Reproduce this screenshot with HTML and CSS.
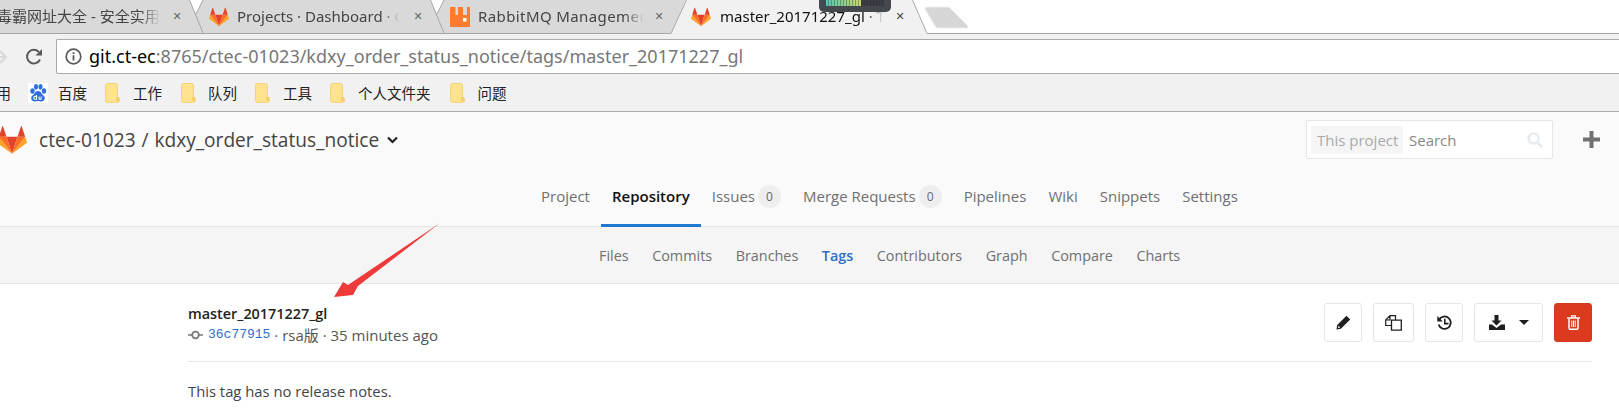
FILE: index.html
```html
<!DOCTYPE html>
<html lang="en">
<head>
<meta charset="utf-8">
<title>master_20171227_gl</title>
<link rel="stylesheet" href="styles.css">
</head>
<body>
<svg class="defs" width="0" height="0">
  <symbol id="tanuki" viewBox="0 0 36 36">
    <path fill="#e24329" d="M18 34.6 24.6 14.1H11.4z"/>
    <path fill="#fc6d26" d="M18 34.6 11.4 14.1H2.2z"/>
    <path fill="#fca326" d="M2.2 14.1.2 20.3c-.2.6 0 1.2.5 1.5L18 34.6z"/>
    <path fill="#e24329" d="M2.2 14.1h9.2L7.4 2c-.2-.6-1-.6-1.2 0z"/>
    <path fill="#fc6d26" d="M18 34.6 24.6 14.1h9.2z"/>
    <path fill="#fca326" d="M33.8 14.1l2 6.2c.2.6 0 1.2-.5 1.5L18 34.6z"/>
    <path fill="#e24329" d="M33.8 14.1h-9.2L28.6 2c.2-.6 1-.6 1.2 0z"/>
  </symbol>
  <symbol id="folder" viewBox="0 0 15 20">
    <path fill="#ffe38f" stroke="#f3d27a" d="M.5 2.5a2 2 0 0 1 2-2h8a2 2 0 0 1 2 2v14h2v1a2 2 0 0 1-2 2h-10a2 2 0 0 1-2-2z"/>
    <path fill="#f6cf6d" d="M11 14h3.500v4h-3.500z"/>
  </symbol>
</svg>

<div class="tabstrip">
  <svg class="tabshapes" width="1619" height="34" viewBox="0 0 1619 34">
    <path fill="#d9d9d9" d="M0 0H189L203 33H0zM203 33L189 0H430L444 33zM444 33L430 0H686L671 33z"/>
    <path fill="#fff" d="M189 0h14l-7 14zM430 0h14l-7 14zM912 0h707v33H927z"/>
    <path fill="#f1f1f1" d="M671 34L686 0H912L927 34z"/>
    <path fill="none" stroke="#a6a6a6" d="M0 33.500H671L686.500 0M912.500 0L927 33.500H1619M189.500 0L203 33M430.500 0L444 33M196 14L203 0M437 14L444 0"/>
    <path fill="#d6d6d6" stroke="#eee" d="M925 9a2 2 0 0 1 2-2H948a3 3 0 0 1 3 2L967 25a1.500 1.500 0 0 1-1.500 3H938a3 3 0 0 1-3-2z"/>
  </svg>
  <div class="tab tab-first">
    <span class="tab-title tab-title-first">毒霸网址大全 - 安全实用网址</span>
    <span class="tab-x">✕</span>
  </div>
  <div class="tab tab-second">
    <svg class="favicon"><use href="#tanuki"/></svg>
    <span class="tab-title tab-title-second">Projects · Dashboard · GitLab</span>
    <span class="tab-x">✕</span>
  </div>
  <div class="tab tab-third">
    <svg class="favicon" viewBox="0 0 20 20">
      <path fill="#ff7b32" d="M0 0h5.500v8H8V0h5v8h4V0h3v20H0z"/>
      <path fill="#fff" d="M13 11h3.500v3.500H13z"/>
    </svg>
    <span class="tab-title tab-title-third">RabbitMQ Management</span>
    <span class="tab-x">✕</span>
  </div>
  <div class="tab tab-active">
    <svg class="favicon"><use href="#tanuki"/></svg>
    <span class="tab-title tab-title-active">master_20171227_gl · Tags</span>
    <span class="tab-x tab-x-active">✕</span>
  </div>
  <div class="meter"><span class="meter-lit"></span></div>
</div>

<div class="toolbar">
  <svg class="back" width="7" height="16" viewBox="0 0 7 16"><path fill="none" stroke="#d8d8d8" stroke-width="2.200" d="M-3 8h9M0 2l6 6-6 6"/></svg>
  <svg class="reload" width="18" height="18" viewBox="0 0 18 18"><path fill="none" stroke="#5a5a5a" stroke-width="2" d="M15 11.500A6.800 6.800 0 1 1 13.800 4"/><path fill="#5a5a5a" d="M17 1v6.500h-6.500z"/></svg>
  <div class="omnibox">
    <svg class="info" width="17" height="17" viewBox="0 0 17 17"><circle cx="8.500" cy="8.500" r="7.300" fill="none" stroke="#5a5a5a" stroke-width="1.700"/><path fill="#5a5a5a" d="M7.600 7.300h1.800v5.200H7.600zM7.600 4.300h1.800v1.800H7.600z"/></svg>
    <span class="url"><span class="url-host">git.ct-ec</span>:8765/ctec-01023/kdxy_order_status_notice/tags/master_20171227_gl</span>
  </div>
</div>

<div class="bookmarks">
  <span class="bm bm-apps">用</span>
  <svg class="baidu" width="20" height="20" viewBox="0 0 20 20">
    <rect width="20" height="20" fill="#fff"/>
    <g fill="#2f6fe0"><ellipse cx="4.500" cy="8" rx="2.200" ry="2.800"/><ellipse cx="8" cy="3.800" rx="2" ry="2.800"/><ellipse cx="12.500" cy="3.800" rx="2" ry="2.800"/><ellipse cx="16" cy="8" rx="2.200" ry="2.800"/><path d="M10 8c3 0 3.500 3 5.500 4.500 2.500 2 1 6-2 6-1.500 0-2.500-.6-3.500-.6s-2 .6-3.500.6c-3 0-4.500-4-2-6C6.500 11 7 8 10 8z"/></g>
    <path fill="none" stroke="#fff" stroke-width="1.100" d="M8.500 12v4.300H7.200a1.400 1.400 0 0 1 0-2.900h1.300M11 13.500v1.800c0 1.400 2.200 1.400 2.200 0v-1.800"/>
  </svg>
  <span class="bm bm-baidu">百度</span>
  <svg class="bm-folder bm-gap-a"><use href="#folder"/></svg><span class="bm bm-label">工作</span>
  <svg class="bm-folder bm-gap-b"><use href="#folder"/></svg><span class="bm bm-label-b">队列</span>
  <svg class="bm-folder bm-gap-a"><use href="#folder"/></svg><span class="bm bm-label">工具</span>
  <svg class="bm-folder bm-gap-a"><use href="#folder"/></svg><span class="bm bm-label">个人文件夹</span>
  <svg class="bm-folder bm-gap-b"><use href="#folder"/></svg><span class="bm bm-label">问题</span>
</div>

<header class="page-head">
  <div class="head-top">
    <svg class="logo"><use href="#tanuki"/></svg>
    <span class="crumb">ctec-01023 / kdxy_order_status_notice</span>
    <svg class="crumb-caret" width="11" height="8" viewBox="0 0 11 8"><path fill="none" stroke="#222" stroke-width="2.200" d="M1 1.500l4.500 4.500L10 1.500"/></svg>
    <div class="search">
      <span class="search-scope">This project</span>
      <span class="search-text">Search</span>
      <svg class="search-icon" width="16" height="16" viewBox="0 0 16 16"><circle cx="6.500" cy="6.500" r="5" fill="none" stroke="#e8ebef" stroke-width="2.600"/><path stroke="#e8ebef" stroke-width="3" d="M10.500 10.500l4.500 4.500"/></svg>
    </div>
    <svg class="plus" width="17" height="17" viewBox="0 0 17 17"><path fill="#707070" d="M6.500 0h4v6.500H17v4h-6.500V17h-4v-6.500H0v-4h6.500z"/></svg>
  </div>
  <nav class="nav">
    <a class="nav-item">Project</a>
    <a class="nav-item nav-active">Repository</a>
    <a class="nav-item">Issues<span class="badge">0</span></a>
    <a class="nav-item">Merge Requests<span class="badge">0</span></a>
    <a class="nav-item">Pipelines</a>
    <a class="nav-item">Wiki</a>
    <a class="nav-item">Snippets</a>
    <a class="nav-item">Settings</a>
  </nav>
</header>
<nav class="subnav">
  <a class="sub-item">Files</a>
  <a class="sub-item">Commits</a>
  <a class="sub-item">Branches</a>
  <a class="sub-item sub-active">Tags</a>
  <a class="sub-item">Contributors</a>
  <a class="sub-item">Graph</a>
  <a class="sub-item">Compare</a>
  <a class="sub-item">Charts</a>
</nav>

<main class="content">
  <div class="tag-head">
    <div class="tag-info">
      <div class="tag-name">master_20171227_gl</div>
      <div class="tag-meta">
        <svg class="commit-icon" width="15" height="10" viewBox="0 0 15 10"><path fill="none" stroke="#777" stroke-width="1.600" d="M0 5h4M11 5h4"/><circle cx="7.500" cy="5" r="3.300" fill="none" stroke="#777" stroke-width="1.800"/></svg>
        <a class="sha">36c77915</a><span> · rsa版 · 35 minutes ago</span>
      </div>
    </div>
    <div class="actions">
      <button class="btn btn-edit"><svg width="15" height="15" viewBox="0 0 15 15"><path fill="#1f1f1f" d="M10.500.8l3.700 3.700-9.300 9.300L.5 14.500l.7-4.400zM2.500 10.700l-.5 2.300 2.300-.5z"/></svg></button>
      <button class="btn btn-copy"><svg width="17" height="16" viewBox="0 0 17 16"><path fill="#fff" stroke="#1f1f1f" stroke-width="1.200" d="M5 .7h5.500v9.800H.7V5zM5 .7V5H.7"/><path fill="#fff" stroke="#1f1f1f" stroke-width="1.300" d="M6.500 5.200h9.800v10H6.500z"/></svg></button>
      <button class="btn btn-hist"><svg width="15" height="15" viewBox="0 0 15 15"><path fill="none" stroke="#1f1f1f" stroke-width="1.800" d="M2.200 4.500A6.200 6.200 0 1 1 1.600 9.500"/><path fill="#1f1f1f" d="M.3 1v5.500h5.500zM7 3.800h1.600v4H11.500v1.600H7z"/></svg></button>
      <button class="btn btn-dl">
        <svg width="16" height="15" viewBox="0 0 16 15"><path fill="#1f1f1f" d="M5.500 0h4v5.500h3L7.500 10.500 2.500 5.500h3zM0 9.500h3L7.500 13 12 9.500h4V15H0z"/></svg>
        <svg width="10" height="5" viewBox="0 0 10 5"><path fill="#1f1f1f" d="M0 0h10L5 5z"/></svg>
      </button>
      <button class="btn btn-del"><svg width="13" height="15" viewBox="0 0 13 15"><path fill="none" stroke="#fff" stroke-width="1.500" d="M2 4v9a1.300 1.300 0 0 0 1.300 1.300h6.400A1.300 1.300 0 0 0 11 13V4"/><path fill="#fff" d="M0 2.300h13v1.500H0zM4 .2h5v2.500H7.800V1.400H5.200v1.300H4zM4.300 5.500h1v6.500h-1zM6 5.500h1v6.500H6zM7.700 5.500h1v6.500h-1z"/></svg></button>
    </div>
  </div>
  <p class="notes">This tag has no release notes.</p>
</main>

<svg class="arrow" width="120" height="90" viewBox="0 0 120 90"><path fill="#ee3a3a" d="M4 84L13 69 18 72 110 10 28 73 23 82z"/></svg>
</body>
</html>
```

FILE: styles.css
```css
* { box-sizing: border-box; }
html, body { margin: 0; padding: 0; }
body {
  width: 1619px;
  height: 410px;
  overflow: hidden;
  position: relative;
  background: #fff;
  font-family: "Open Sans", "Noto Sans CJK SC", sans-serif;
  color: #555;
}
.defs { position: absolute; }

/* browser chrome */
.tabstrip {
  position: relative;
  display: flex;
  height: 34px;
  font-family: "Noto Sans", "Noto Sans CJK SC", sans-serif;
  font-size: 15px;
  color: #444;
  background: #fff;
}
.tabshapes { position: absolute; left: 0; top: 0; }
.tab { position: relative; display: flex; align-items: center; height: 33px; overflow: hidden; flex: none; }
.tab-first { width: 203px; }
.tab-second { width: 241px; padding-left: 6px; }
.tab-third { width: 242px; padding-left: 6px; }
.tab-active { width: 226px; padding-left: 5px; color: #111; }
.favicon { width: 20px; height: 20px; flex: none; }
.tab-title {
  display: block;
  overflow: hidden;
  white-space: nowrap;
  flex: none;
  margin-bottom: 2px;
  -webkit-mask-image: linear-gradient(to right, #000 88%, transparent);
  mask-image: linear-gradient(to right, #000 88%, transparent);
}
.tab-title-first { width: 163px; margin-left: -3px; margin-right: 11px; }
.tab-title-second { width: 163px; margin-left: 8px; margin-right: 12px; }
.tab-title-third { width: 166px; margin-left: 8px; margin-right: 9px; letter-spacing: 0.4px; }
.tab-title-active { width: 164px; margin-left: 9px; margin-right: 10px; }
.tab-x { font-size: 11px; font-weight: 700; color: #666; width: 12px; flex: none; text-align: center; font-family: "DejaVu Sans", sans-serif; }
.tab-x-active { color: #444; }
.meter {
  position: absolute;
  left: 819px;
  top: 0;
  width: 72px;
  height: 12px;
  border-radius: 0 0 5px 5px;
  background: #45484f;
  padding: 0 7px;
}
.meter-lit {
  display: block;
  width: 58px;
  height: 6px;
  background:
    repeating-linear-gradient(to right, transparent 0 2px, rgba(40,44,50,.35) 2px 3px),
    linear-gradient(to right, #4fc9b0 0, #c9d66a 60%, #3a3d44 60%);
}

.toolbar {
  display: flex;
  align-items: flex-start;
  height: 39px;
  background: #f1f1f1;
  padding-top: 5px;
}
.back { margin-top: 10px; flex: none; }
.reload { margin: 9px 0 0 18px; flex: none; }
.omnibox {
  display: flex;
  align-items: center;
  height: 35px;
  flex: 1;
  margin-left: 13px;
  padding-left: 8px;
  background: #fff;
  border: 1px solid #aaa;
  border-right: 0;
  border-radius: 2px 0 0 2px;
}
.info { flex: none; }
.url { margin-left: 7px; margin-bottom: 2px; font-family: "Noto Sans", sans-serif; font-size: 18px; color: #777; white-space: nowrap; }
.url-host { color: #000; }

.bookmarks {
  display: flex;
  align-items: center;
  height: 39px;
  padding-top: 1px;
  background: #f1f1f1;
  border-bottom: 1px solid #aaa;
  font-family: "Noto Sans CJK SC", sans-serif;
  font-size: 14.5px;
  color: #222;
}
.bm { white-space: nowrap; flex: none; }
.bm-apps { margin-left: -3.5px; }
.baidu { margin-left: 17px; flex: none; }
.bm-baidu { margin-left: 10px; }
.bm-folder { width: 15px; height: 20px; flex: none; }
.bm-gap-a { margin-left: 18px; }
.bm-gap-b { margin-left: 19px; }
.bm-label { margin-left: 13px; }
.bm-label-b { margin-left: 12px; }

/* gitlab page */
.page-head {
  height: 115px;
  background: #fafafa;
  border-bottom: 1px solid #e5e5e5;
}
.head-top {
  display: flex;
  align-items: center;
  height: 50px;
  padding-top: 5px;
  padding-right: 19px;
}
.logo { width: 30px; height: 30px; margin-left: -3px; flex: none; }
.crumb { margin-left: 12px; font-size: 19.1px; word-spacing: 1px; color: #444; white-space: nowrap; }
.crumb-caret { margin-left: 8px; flex: none; }
.search {
  display: flex;
  align-items: center;
  width: 247px;
  height: 39px;
  margin-left: auto;
  padding-left: 4px;
  background: #fff;
  border: 1px solid #e5e5e5;
  border-radius: 2px;
  font-size: 15px;
  flex: none;
}
.search-scope {
  display: flex;
  align-items: center;
  width: 92px;
  height: 28px;
  padding: 0 6px;
  background: #f5f5f5;
  border-radius: 2px;
  color: #aaa;
  white-space: nowrap;
}
.search-text { margin-left: 6px; color: #888; }
.search-icon { margin-left: auto; margin-right: 9px; flex: none; }
.plus { margin-left: 30px; flex: none; }

.nav {
  display: flex;
  justify-content: flex-start;
  height: 64px;
  padding-left: 530px;
  font-size: 15px;
}
.nav-item {
  display: flex;
  align-items: center;
  height: 65px;
  padding: 14px 11px 11px;
  color: #707070;
  white-space: nowrap;
}
.nav-active {
  color: #111;
  font-weight: 600;
  border-bottom: 3px solid #1f78d1;
  padding-bottom: 8px;
}
.badge {
  display: flex;
  align-items: center;
  justify-content: center;
  width: 23px;
  height: 23px;
  margin-left: 3px;
  border-radius: 50%;
  background: #eee;
  color: #666;
  font-size: 12px;
}

.subnav {
  display: flex;
  align-items: center;
  gap: 23.5px;
  height: 57px;
  padding-left: 599px;
  background: #f5f5f5;
  border-bottom: 1px solid #e5e5e5;
  font-size: 14.4px;
}
.sub-item { color: #707070; white-space: nowrap; }
.sub-active { color: #2e6fc7; font-weight: 600; }

.content { padding: 17px 27px 0 188px; }
.tag-head {
  display: flex;
  justify-content: space-between;
  height: 61px;
  border-bottom: 1px solid #e5e5e5;
}
.tag-name { font-size: 14.4px; line-height: 20px; margin-top: 3px; font-weight: 600; color: #222; }
.tag-meta { display: flex; align-items: center; margin-top: 0; font-size: 15px; line-height: 22px; color: #555; white-space: pre; }
.commit-icon { margin-right: 5px; flex: none; }
.sha { color: #2e6fc7; font-family: "Liberation Mono", monospace; font-size: 13px; }
.actions { display: flex; gap: 11px; margin-top: 2px; height: 39px; }
.btn {
  display: flex;
  align-items: center;
  justify-content: center;
  height: 39px;
  padding: 0;
  background: #fff;
  border: 1px solid #e5e5e5;
  border-radius: 3px;
}
.btn-edit { width: 38px; }
.btn-copy { width: 41px; }
.btn-hist { width: 38px; }
.btn-dl { width: 69px; gap: 14px; }
.btn-del { width: 38px; background: #db3a1f; border-color: #d13a1f; }
.notes { margin: 19px 0 0; font-size: 14.8px; color: #444; }

.arrow { position: absolute; left: 330px; top: 213px; }
```
